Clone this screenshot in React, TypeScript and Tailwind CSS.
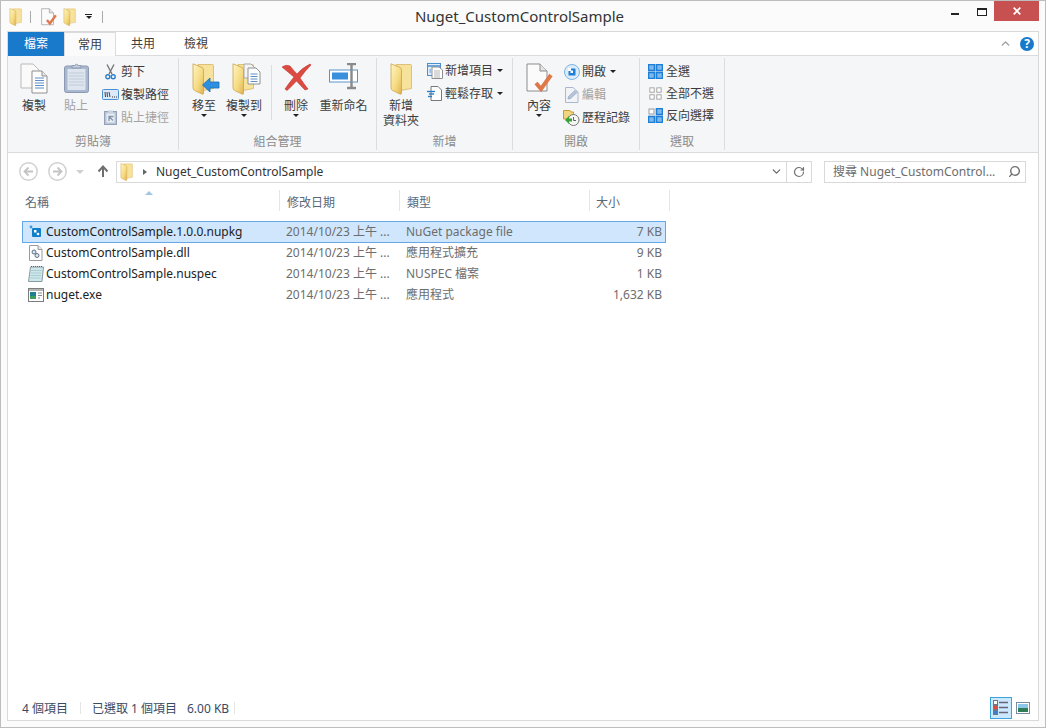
import React, { useId } from "react";
import { ChevronDown, ChevronUp, RotateCw, Search } from "lucide-react";

const FILES = [
  { name: "CustomControlSample.1.0.0.nupkg", type: "NuGet package file", size: "7 KB", icon: "nupkg", selected: true },
  { name: "CustomControlSample.dll", type: "應用程式擴充", size: "9 KB", icon: "dll", selected: false },
  { name: "CustomControlSample.nuspec", type: "NUSPEC 檔案", size: "1 KB", icon: "nuspec", selected: false },
  { name: "nuget.exe", type: "應用程式", size: "1,632 KB", icon: "exe", selected: false },
];

function Folder({ w, h }: { w: number; h: number }) {
  const id = useId();
  return (
    <svg width={w} height={h} viewBox="0 0 22 32">
      <defs>
        <linearGradient id={id} x1="0" y1="0" x2="1" y2="1">
          <stop offset="0" stopColor="#fff6c4" />
          <stop offset="0.6" stopColor="#f5d97f" />
          <stop offset="1" stopColor="#dfb052" />
        </linearGradient>
      </defs>
      <path d="M6 1.5H20.5a1 1 0 0 1 1 1V25.5L8 28Z" fill="#f7e29c" stroke="#d8b566" strokeWidth="0.8" />
      <path d="M1 0.8 L10 4.5 Q11.5 5.2 11.5 7 V30.2 Q11.5 31.6 10 31 L2.8 27.6 Q1 26.8 1 24.8 Z" fill={`url(#${id})`} stroke="#cda349" strokeWidth="0.8" />
    </svg>
  );
}

function Caret() {
  return <span className="block w-0 h-0 border-x-[3px] border-x-transparent border-t-[3px] border-t-[#222]" />;
}

function DocCheck({ w, h }: { w: number; h: number }) {
  return (
    <svg width={w} height={h} viewBox="0 0 27 30">
      <path d="M1 1H14L21 8V28H1Z" fill="#fbfbfb" stroke="#8c8c8c" />
      <path d="M14 1V8H21" fill="#e4e4e4" stroke="#8c8c8c" />
      <path d="M10 20 L15 26 L25 12" fill="none" stroke="#e0794a" strokeWidth="4" />
    </svg>
  );
}

function CopyIcon() {
  return (
    <svg width="28" height="31" viewBox="0 0 28 31">
      <path d="M1 1H13L19 7V25H1Z" fill="#fafafa" stroke="#b9b9b9" />
      <path d="M12 8H22L27 13V30H12Z" fill="#fdfdfd" stroke="#8f8f8f" />
      <path d="M22 8V13H27" fill="#e8e8e8" stroke="#8f8f8f" />
      <path d="M15 15H24M15 17.5H24M15 20H24M15 22.5H24M15 25H24" stroke="#5b8fc9" strokeWidth="1.2" />
    </svg>
  );
}

function PasteIcon() {
  return (
    <svg width="25" height="30" viewBox="0 0 25 30">
      <rect x="0.5" y="3" width="24" height="26.5" rx="2" fill="#a9b8cf" stroke="#8b9ab3" />
      <rect x="3.5" y="6" width="18" height="21" fill="#dfe5ee" />
      <path d="M5 10H20M5 13H20M5 16H20M5 19H20M5 22H20" stroke="#c0cbdb" />
      <path d="M8 5V2.5H10.5Q12.5 0 14.5 2.5H17V5Z" fill="#c3cddb" stroke="#8b9ab3" />
    </svg>
  );
}

function ScissorsIcon() {
  return (
    <svg width="11" height="16" viewBox="0 0 11 16">
      <path d="M2 0.5 L7 10 M9 0.5 L4 10" stroke="#777" strokeWidth="1.4" fill="none" />
      <circle cx="2.8" cy="12.8" r="2" fill="none" stroke="#2a7fcb" strokeWidth="1.4" />
      <circle cx="8.2" cy="12.8" r="2" fill="none" stroke="#2a7fcb" strokeWidth="1.4" />
    </svg>
  );
}

function PathIcon() {
  return (
    <svg width="17" height="11" viewBox="0 0 17 11">
      <rect x="0.5" y="0.5" width="16" height="10" rx="1" fill="#dbe9f8" stroke="#4a8fd0" />
      <path d="M3 3L3.5 8M5 3L5.5 8M7 3L8 8" stroke="#333" strokeWidth="0.9" />
      <path d="M10 8H11M12 8H13M14 8H15" stroke="#333" />
    </svg>
  );
}

function ShortcutIcon() {
  return (
    <svg width="13" height="15" viewBox="0 0 13 15">
      <rect x="0.5" y="1.5" width="12" height="13" fill="#b9c5d6" stroke="#93a2b8" />
      <rect x="2.5" y="3.5" width="8" height="9" fill="#e9edf3" />
      <path d="M4 0.5H9V3H4Z" fill="#c7d1df" />
      <path d="M5 11V6.5H9.5M5 6.5L9 10.5" stroke="#8496ae" strokeWidth="1.3" fill="none" />
    </svg>
  );
}

function MoveIcon() {
  return (
    <div className="relative w-[28px] h-[33px] ml-[4px]">
      <Folder w={22} h={32} />
      <svg width="18" height="16" viewBox="0 0 18 16" className="absolute left-[10px] top-[14px]">
        <path d="M0.5 8 L8 1 V5 H17 V11 H8 V15 Z" fill="#2e8fe0" stroke="#1c6db5" strokeWidth="0.8" />
      </svg>
    </div>
  );
}

function CopyToIcon() {
  return (
    <div className="relative w-[30px] h-[33px] ml-[6px]">
      <Folder w={22} h={32} />
      <svg width="18" height="22" viewBox="0 0 18 22" className="absolute left-[11px] top-0">
        <path d="M1 1H8L12 5V15H1Z" fill="#f4f4f4" stroke="#a8a8a8" />
        <path d="M5 5H13L17 9V21H5Z" fill="#fdfdfd" stroke="#8f8f8f" />
        <path d="M7.5 11H14.5M7.5 13.5H14.5M7.5 16H14.5M7.5 18.5H14.5" stroke="#5b8fc9" />
      </svg>
    </div>
  );
}

function DeleteIcon() {
  return (
    <svg width="31" height="28" viewBox="0 0 31 28">
      <path d="M1 4 Q5 1 9 3 Q13 8 16 11 Q21 5 29 1 L30 2 Q24 8 19 15 Q23 21 27 26 L24 27 Q20 23 15.5 18 Q11 23 6 27.5 L4 26 Q8 20 13 14 Q7 9 1 4 Z" fill="#dc4a42" stroke="#bf3b34" strokeWidth="0.6" />
    </svg>
  );
}

function RenameIcon() {
  return (
    <svg width="30" height="27" viewBox="0 0 30 27">
      <rect x="0.5" y="7" width="28" height="12" fill="#fff" stroke="#5a93c9" />
      <rect x="3" y="9.5" width="16" height="7" fill="#3a8fdd" />
      <path d="M18 1H27M18 25H27M22.5 1V25" stroke="#8a8a8a" strokeWidth="2.4" fill="none" />
    </svg>
  );
}

function NewItemIcon() {
  return (
    <svg width="16" height="16" viewBox="0 0 16 16">
      <rect x="0.5" y="0.5" width="13" height="12" fill="#e1edf9" stroke="#4a8fd0" />
      <path d="M1 3H13" stroke="#4a8fd0" strokeWidth="1.5" />
      <path d="M5 4H12L15.5 7V15.5H5Z" fill="#fff" stroke="#8f8f8f" />
      <path d="M7 8H13M7 10H13M7 12H13M7 14H13" stroke="#b5b5b5" />
      <path d="M2.5 7H4M2.5 9H4" stroke="#4a8fd0" />
    </svg>
  );
}

function EasyAccessIcon() {
  return (
    <svg width="15" height="15" viewBox="0 0 15 15">
      <path d="M4 0.5H11L14.5 4V14.5H4Z" fill="#fff" stroke="#777" />
      <path d="M0 5.5H8" stroke="#2a7fcb" strokeWidth="1.4" />
      <path d="M2 8H7" stroke="#2a7fcb" strokeWidth="1.4" />
      <path d="M1 10.5H5" stroke="#2a7fcb" strokeWidth="1.4" />
    </svg>
  );
}

function OpenIcon() {
  return (
    <svg width="16" height="16" viewBox="0 0 16 16">
      <circle cx="8" cy="8" r="7.5" fill="#dcecfa" stroke="#7db4e3" />
      <rect x="4.5" y="4.5" width="7" height="7" rx="0.5" fill="#1f7fd6" />
      <rect x="4" y="4" width="3" height="3" fill="#fff" />
      <rect x="6.5" y="6.5" width="2.5" height="2.5" fill="#fff" />
    </svg>
  );
}

function EditIcon() {
  return (
    <svg width="14" height="16" viewBox="0 0 14 16">
      <path d="M0.5 0.5H8L13 5V15.5H0.5Z" fill="#f1f3f7" stroke="#a9b8cf" />
      <path d="M3 12 L3.5 9.5 L10 3.5 L12 5.5 L5.5 11.5 Z" fill="#b7c5d9" stroke="#8fa2bd" strokeWidth="0.7" />
    </svg>
  );
}

function HistoryIcon() {
  return (
    <svg width="17" height="16" viewBox="0 0 17 16">
      <path d="M0.5 0.5H7L8 2H10.5V9H0.5Z" fill="#f1d67f" stroke="#c79a38" />
      <circle cx="10.5" cy="10" r="5.5" fill="#f5f5f5" stroke="#777" />
      <path d="M10.5 7V10.5H13" stroke="#666" fill="none" />
      <path d="M2 10L6 6V8.5H9V11.5H6V14Z" fill="#3aa03a" />
    </svg>
  );
}

function SelectGrid({ filled, size = 15 }: { filled: boolean[]; size?: number }) {
  return (
    <svg width={size} height={size} viewBox="0 0 15 15">
      {[0, 1, 2, 3].map((i) => {
        const x = i % 2 === 0 ? 0.5 : 8.5;
        const y = i < 2 ? 0.5 : 8.5;
        return filled[i] ? (
          <rect key={i} x={x} y={y} width="6" height="6" fill="#7fb8ec" stroke="#1f7fd6" strokeWidth="1.6" />
        ) : (
          <rect key={i} x={x + 0.5} y={y + 0.5} width="5" height="5" fill="#fff" stroke="#9a9a9a" />
        );
      })}
    </svg>
  );
}

function FileIcon({ kind }: { kind: string }) {
  if (kind === "nupkg")
    return (
      <svg width="13" height="13" viewBox="0 0 13 13">
        <rect x="3" y="3" width="9" height="9" rx="1" fill="#0f7fc9" />
        <circle cx="2" cy="2" r="1.4" fill="#3a9ad9" />
        <rect x="5" y="5" width="2.5" height="2.5" fill="#fff" />
        <circle cx="9" cy="9" r="1.3" fill="#fff" />
      </svg>
    );
  if (kind === "dll")
    return (
      <svg width="14" height="16" viewBox="0 0 14 16">
        <path d="M0.5 0.5H9L13 4.5V15.5H0.5Z" fill="#fff" stroke="#9a9a9a" />
        <path d="M9 0.5V4.5H13" fill="#e8e8e8" stroke="#9a9a9a" />
        <circle cx="5" cy="7" r="2" fill="#dfe7f0" stroke="#5e6f86" />
        <circle cx="8" cy="10.5" r="2" fill="#dfe7f0" stroke="#5e6f86" />
      </svg>
    );
  if (kind === "nuspec")
    return (
      <svg width="16" height="16" viewBox="0 0 16 16">
        <path d="M2.5 1H15.5L14 15.5H0.5Z" fill="#cfe6ea" stroke="#8a9aa0" />
        <path d="M3.5 1V0M5.5 1V0M7.5 1V0M9.5 1V0M11.5 1V0M13.5 1V0" stroke="#666" />
        <path d="M3 4.5H13.5M2.7 7H13.2M2.4 9.5H13M2.1 12H12.7" stroke="#a9cdd5" />
      </svg>
    );
  return (
    <svg width="16" height="14" viewBox="0 0 16 14">
      <rect x="0.5" y="0.5" width="15" height="13" fill="#fff" stroke="#7d7d7d" />
      <rect x="1" y="1" width="14" height="2" fill="#b5b5b5" />
      <rect x="2" y="4" width="6" height="7" fill="#1d7f8f" />
      <rect x="2" y="8" width="6" height="3" fill="#3da05a" />
      <path d="M10 5H14M10 7.5H14M10 10H12" stroke="#888" />
    </svg>
  );
}

function Large({
  w,
  label,
  icon,
  caret,
  gray,
}: {
  w: string;
  label: React.ReactNode;
  icon: React.ReactNode;
  caret?: boolean;
  gray?: boolean;
}) {
  return (
    <div className={`${w} flex flex-col items-center`}>
      <div className="h-[35px] flex items-start justify-center">{icon}</div>
      <div className={`leading-[15px] text-center whitespace-nowrap ${gray ? "text-[#a3a3a3]" : "text-[#3c3c3c]"}`}>{label}</div>
      {caret && (
        <div className="mt-[1px]">
          <Caret />
        </div>
      )}
    </div>
  );
}

function Small({
  icon,
  label,
  caret,
  gray,
}: {
  icon: React.ReactNode;
  label: string;
  caret?: boolean;
  gray?: boolean;
}) {
  return (
    <div className={`h-[23px] flex items-center whitespace-nowrap ${gray ? "text-[#a3a3a3]" : "text-[#3c3c3c]"}`}>
      <div className="w-[21px] flex justify-center">{icon}</div>
      <span>{label}</span>
      {caret && (
        <span className="ml-[4px]">
          <Caret />
        </span>
      )}
    </div>
  );
}

function Group({ w, label, children }: { w: string; label: string; children: React.ReactNode }) {
  return (
    <div className={`${w} my-[2px] border-r border-[#dcdddf] flex flex-col`}>
      <div className="h-[76px] shrink-0 flex items-start pt-[5px]">{children}</div>
      <div className="h-[16px] leading-[16px] text-center text-[#8c8c8c]">{label}</div>
    </div>
  );
}

function NavCircle({ flip }: { flip?: boolean }) {
  return (
    <svg width="19" height="19" viewBox="0 0 19 19" className={flip ? "-scale-x-100" : ""}>
      <circle cx="9.5" cy="9.5" r="8.7" fill="none" stroke="#cfcfcf" strokeWidth="1.4" />
      <path d="M14 9.5H6M9.5 5.5L5.5 9.5L9.5 13.5" fill="none" stroke="#c4c4c4" strokeWidth="1.8" />
    </svg>
  );
}

export default function App() {
  return (
    <div className="w-[1046px] h-[728px] bg-[#fbfbfb] border border-[#bdbdbd] px-[6px] pb-[6px] flex flex-col overflow-hidden font-['Noto_Sans','Noto_Sans_CJK_TC',sans-serif] text-[12px]">
      {/* title bar */}
      <div className="h-[30px] shrink-0 grid grid-cols-[130px_1fr_137px]">
        <div className="flex items-center pl-[2px] pt-[1px]">
          <Folder w={13} h={18} />
          <div className="ml-[8px] w-px h-[12px] bg-[#a9a9a9]" />
          <div className="ml-[10px]">
            <DocCheck w={16} h={18} />
          </div>
          <div className="ml-[6px]">
            <Folder w={13} h={18} />
          </div>
          <div className="ml-[9px] flex flex-col items-center gap-[1px]">
            <div className="w-[7px] h-px bg-[#222]" />
            <Caret />
          </div>
          <div className="ml-[10px] w-px h-[12px] bg-[#a9a9a9]" />
        </div>
        <div className="text-center text-[15px] leading-[30px] text-[#333]">Nuget_CustomControlSample</div>
        <div className="flex items-start justify-end">
          <div className="w-[8px] h-[2px] bg-[#222] mt-[12px] mr-[18px]" />
          <div className="w-[10px] h-[8px] border border-t-2 border-[#222] mt-[7px] mr-[7px]" />
          <div className="w-[45px] h-[20px] bg-[#c75050] flex items-center justify-center">
            <svg width="8" height="8" viewBox="0 0 8 8">
              <path d="M0.7 0.7L7.3 7.3M7.3 0.7L0.7 7.3" stroke="#fff" strokeWidth="1.7" />
            </svg>
          </div>
        </div>
      </div>

      <div className="flex-1 min-h-0 border border-[#d9d9d9] bg-white flex flex-col">
        {/* tabs */}
        <div className="h-[24px] shrink-0 flex items-stretch border-b border-[#dadbdc] bg-white">
          <div className="w-[56px] -mb-px bg-[#1979ca] text-white text-center leading-[24px]">檔案</div>
          <div className="w-[52px] h-[25px] bg-[#fbfbfc] border-x border-t border-[#dadbdc] text-[#3c3c3c] text-center leading-[24px]">常用</div>
          <div className="w-[54px] text-center leading-[24px] text-[#3c3c3c]">共用</div>
          <div className="w-[52px] text-center leading-[24px] text-[#3c3c3c]">檢視</div>
          <div className="flex-1 flex items-center justify-end pr-[4px] gap-[8px]">
            <ChevronUp size={13} strokeWidth={2.6} className="text-[#9a9a9a]" />
            <div className="w-[14px] h-[14px] rounded-full bg-[#1979ca] text-white font-bold text-[12px] leading-[14px] text-center">?</div>
          </div>
        </div>

        {/* ribbon */}
        <div className="h-[97px] shrink-0 bg-[#f5f6f7] border-b border-[#dadbdc] flex">
          <Group w="w-[171px]" label="剪貼簿">
            <div className="flex pl-[5px]">
              <Large w="w-[42px]" icon={<CopyIcon />} label="複製" />
              <Large w="w-[42px]" icon={<PasteIcon />} label="貼上" gray />
              <div className="-mt-[3px] ml-[3px]">
                <Small icon={<ScissorsIcon />} label="剪下" />
                <Small icon={<PathIcon />} label="複製路徑" />
                <Small icon={<ShortcutIcon />} label="貼上捷徑" gray />
              </div>
            </div>
          </Group>
          <Group w="w-[198px]" label="組合管理">
            <div className="flex pl-[8px]">
              <Large w="w-[34px]" icon={<MoveIcon />} label="移至" caret />
              <Large w="w-[46px]" icon={<CopyToIcon />} label="複製到" caret />
              <div className="w-px h-[55px] bg-[#dcdddf] mx-[4px] mt-[2px]" />
              <Large w="w-[40px]" icon={<DeleteIcon />} label="刪除" caret />
              <Large w="w-[55px]" icon={<RenameIcon />} label="重新命名" />
            </div>
          </Group>
          <Group w="w-[136px]" label="新增">
            <div className="flex pl-[5px]">
              <Large w="w-[38px]" icon={<Folder w={22} h={32} />} label={<>新增<br />資料夾</>} />
              <div className="-mt-[4px] ml-[4px]">
                <Small icon={<NewItemIcon />} label="新增項目" caret />
                <Small icon={<EasyAccessIcon />} label="輕鬆存取" caret />
              </div>
            </div>
          </Group>
          <Group w="w-[127px]" label="開啟">
            <div className="flex pl-[8px]">
              <Large w="w-[36px]" icon={<DocCheck w={27} h={30} />} label="內容" caret />
              <div className="-mt-[3px] ml-[4px]">
                <Small icon={<OpenIcon />} label="開啟" caret />
                <Small icon={<EditIcon />} label="編輯" gray />
                <Small icon={<HistoryIcon />} label="歷程記錄" />
              </div>
            </div>
          </Group>
          <Group w="w-[85px]" label="選取">
            <div className="-mt-[3px] pl-[5px]">
              <div className="h-[22px]"><Small icon={<SelectGrid filled={[true, true, true, true]} />} label="全選" /></div>
              <div className="h-[22px]"><Small icon={<SelectGrid filled={[false, false, false, false]} size={13} />} label="全部不選" /></div>
              <div className="h-[22px]"><Small icon={<SelectGrid filled={[false, true, true, true]} />} label="反向選擇" /></div>
            </div>
          </Group>
        </div>

        {/* address bar */}
        <div className="h-[37px] shrink-0 flex items-center pl-[11px]">
          <NavCircle />
          <div className="ml-[10px]">
            <NavCircle flip />
          </div>
          <div className="ml-[3px] w-[20px] flex justify-center">
            <div className="w-0 h-0 border-x-[4px] border-x-transparent border-t-[4px] border-t-[#d0d0d0]" />
          </div>
          <svg width="12" height="13" viewBox="0 0 12 13" className="ml-[7px]">
            <path d="M6 12V2M1.5 6.5L6 1.5L10.5 6.5" fill="none" stroke="#6f6f6f" strokeWidth="2" />
          </svg>
          <div className="ml-[7px] w-[696px] shrink-0 h-[22px] border border-[#d9d9d9] flex items-center">
            <div className="ml-[3px]">
              <Folder w={13} h={18} />
            </div>
            <div className="ml-[10px] w-0 h-0 border-y-[3.5px] border-y-transparent border-l-[4px] border-l-[#666]" />
            <span className="ml-[9px] text-[#333] text-[12px]">Nuget_CustomControlSample</span>
            <div className="flex-1 flex justify-end pr-[3px]">
              <ChevronDown size={13} strokeWidth={2.6} className="text-[#6f6f6f]" />
            </div>
            <div className="w-[25px] h-full border-l border-[#d9d9d9] flex items-center justify-center">
              <RotateCw size={12} strokeWidth={2.4} className="text-[#6f6f6f]" />
            </div>
          </div>
          <div className="ml-[12px] w-[202px] shrink-0 h-[22px] border border-[#d9d9d9] flex items-center pl-[8px] pr-[4px] text-[#6d6d6d]">
            <span className="text-[12px] whitespace-nowrap">搜尋 Nuget_CustomControl...</span>
            <div className="flex-1 flex justify-end">
              <Search size={13} strokeWidth={2.6} className="text-[#6f6f6f] -scale-x-100" />
            </div>
          </div>
        </div>

        {/* file list */}
        <div className="flex-1 min-h-0 pl-[14px] flex flex-col">
          <div className="relative h-[21px] flex text-[#5a6779] leading-[26px]">
            <div className="absolute left-[123px] top-[1px] w-0 h-0 border-x-[4px] border-x-transparent border-b-[4px] border-b-[#a3c5e3]" />
            <div className="w-[258px] pl-[3px] border-r border-[#e5e5e5]">名稱</div>
            <div className="w-[120px] pl-[7px] border-r border-[#e5e5e5]">修改日期</div>
            <div className="w-[190px] pl-[7px] border-r border-[#e5e5e5]">類型</div>
            <div className="w-[80px] pl-[6px] border-r border-[#e5e5e5]">大小</div>
          </div>
          <div className="mt-[10px] w-[644px]">
            {FILES.map((f) => (
              <div
                key={f.name}
                className={`flex items-center leading-[19px] border ${
                  f.selected ? "h-[22px] -mb-px pb-px bg-[#cfe6fd] border-[#66a7e8]" : "h-[21px] border-transparent"
                }`}
              >
                <div className="w-[23px] flex justify-center pl-[2px]">
                  <FileIcon kind={f.icon} />
                </div>
                <div className="w-[240px] text-[#222] text-[12px] whitespace-nowrap">{f.name}</div>
                <div className="w-[120px] text-[#6d6d6d] whitespace-nowrap">2014/10/23 上午 ...</div>
                <div className="w-[167px] text-[#6d6d6d] whitespace-nowrap">{f.type}</div>
                <div className="w-[92px] text-right text-[#6d6d6d] pr-[3px]">{f.size}</div>
              </div>
            ))}
          </div>
        </div>

        {/* status bar */}
        <div className="h-[25px] shrink-0 flex items-center pl-[14px] text-[#3b4a63]">
          <span className="w-[58px] pt-[2px]">4 個項目</span>
          <div className="w-px h-[12px] bg-[#e5e5e5]" />
          <span className="ml-[11px] w-[95px] pt-[2px]">已選取 1 個項目</span>
          <span className="w-[47px] pt-[2px] whitespace-nowrap">6.00 KB</span>
          <div className="w-px h-[12px] bg-[#e5e5e5]" />
          <div className="flex-1 flex items-center justify-end pr-[5px] gap-px">
            <div className="w-[22px] h-[22px] bg-[#cce8ff] border border-[#3ea3dc] flex items-center justify-center">
              <svg width="16" height="15" viewBox="0 0 16 15">
                <rect x="0.5" y="0.5" width="4" height="4" fill="#fff" stroke="#777" />
                <rect x="0.5" y="5.5" width="4" height="4" fill="#e24a3b" stroke="#777" />
                <rect x="0.5" y="10.5" width="4" height="4" fill="#3a7fd0" stroke="#777" />
                <path d="M6 2.5H15M6 7.5H15M6 12.5H15" stroke="#667" strokeWidth="1.4" />
              </svg>
            </div>
            <div className="w-[20px] h-[22px] flex items-center justify-center">
              <svg width="14" height="12" viewBox="0 0 14 12">
                <rect x="0.5" y="0.5" width="13" height="11" fill="#fff" stroke="#7c8aa0" />
                <rect x="2" y="2" width="10" height="4" fill="#8cc7e8" />
                <rect x="2" y="6" width="10" height="4" fill="#2f7d55" />
              </svg>
            </div>
          </div>
        </div>
      </div>
    </div>
  );
}
